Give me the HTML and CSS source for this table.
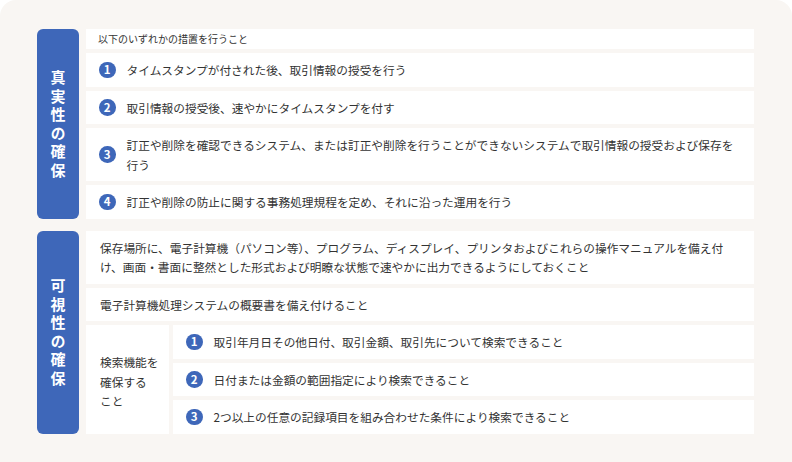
FILE: index.html
```html
<!DOCTYPE html>
<html lang="ja">
<head>
<meta charset="utf-8">
<link rel="stylesheet" href="styles.css">
</head>
<body>
<div class="panel">
  <section class="block">
    <div class="label"><span>真実性の確保</span></div>
    <div class="rows">
      <div class="row note">以下のいずれかの措置を行うこと</div>
      <div class="row item"><span class="num">1</span><p>タイムスタンプが付された後、取引情報の授受を行う</p></div>
      <div class="row item"><span class="num">2</span><p>取引情報の授受後、速やかにタイムスタンプを付す</p></div>
      <div class="row item"><span class="num">3</span><p>訂正や削除を確認できるシステム、または訂正や削除を行うことができないシステムで取引情報の授受および保存を行う</p></div>
      <div class="row item"><span class="num">4</span><p>訂正や削除の防止に関する事務処理規程を定め、それに沿った運用を行う</p></div>
    </div>
  </section>
  <section class="block">
    <div class="label"><span>可視性の確保</span></div>
    <div class="rows">
      <div class="row">保存場所に、電子計算機（パソコン等）、プログラム、ディスプレイ、プリンタおよびこれらの操作マニュアルを備え付け、画面・書面に整然とした形式および明瞭な状態で速やかに出力できるようにしておくこと</div>
      <div class="row">電子計算機処理システムの概要書を備え付けること</div>
      <div class="split">
        <div class="side">検索機能を<br>確保する<br>こと</div>
        <div class="sub">
          <div class="row item"><span class="num">1</span><p>取引年月日その他日付、取引金額、取引先について検索できること</p></div>
          <div class="row item"><span class="num">2</span><p>日付または金額の範囲指定により検索できること</p></div>
          <div class="row item"><span class="num">3</span><p>2つ以上の任意の記録項目を組み合わせた条件により検索できること</p></div>
        </div>
      </div>
    </div>
  </section>
</div>
</body>
</html>
```

FILE: styles.css
```css
html, body {
  margin: 0;
  padding: 0;
  background: #ffffff;
}
body {
  font-family: "Noto Sans CJK JP", "Noto Sans", sans-serif;
  color: #333333;
}
.panel {
  background: #f9f6f3;
  border-radius: 16px 16px 0 0;
  min-height: 462px;
  box-sizing: border-box;
  padding: 29px 38px 20px 37px;
  display: flex;
  flex-direction: column;
  gap: 12px;
}
.block {
  display: flex;
  gap: 7px;
}
.label {
  flex: none;
  width: 42px;
  background: #3e67b9;
  border-radius: 6px;
  color: #ffffff;
  display: flex;
  align-items: center;
  justify-content: center;
}
.label span {
  writing-mode: vertical-rl;
  text-orientation: upright;
  font-size: 15px;
  font-weight: 700;
  line-height: 1;
  letter-spacing: 3.5px;
  padding-top: 3.5px;
}
.rows {
  flex: 1;
  display: flex;
  flex-direction: column;
  gap: 4px;
  min-width: 0;
}
.row {
  background: #ffffff;
  padding: 7px 14px;
  font-size: 11.7px;
  line-height: 19.5px;
}
.row p {
  margin: 0;
}
.note {
  font-size: 10px;
  line-height: 14px;
  padding: 3px 12px;
}
.item {
  display: flex;
  align-items: center;
  gap: 11px;
  padding-left: 13px;
}
.num {
  flex: none;
  width: 16.5px;
  height: 16.5px;
  border-radius: 50%;
  background: #3e67b9;
  color: #ffffff;
  font-size: 11.5px;
  font-weight: 700;
  line-height: 1;
  display: flex;
  align-items: center;
  justify-content: center;
}
.split {
  display: flex;
  gap: 4px;
}
.side {
  flex: none;
  width: 83px;
  box-sizing: border-box;
  background: #ffffff;
  padding: 4px 6px 0 14px;
  font-size: 11.7px;
  line-height: 19.5px;
  display: flex;
  align-items: center;
}
.sub {
  flex: 1;
  display: flex;
  flex-direction: column;
  gap: 4px;
}
```
